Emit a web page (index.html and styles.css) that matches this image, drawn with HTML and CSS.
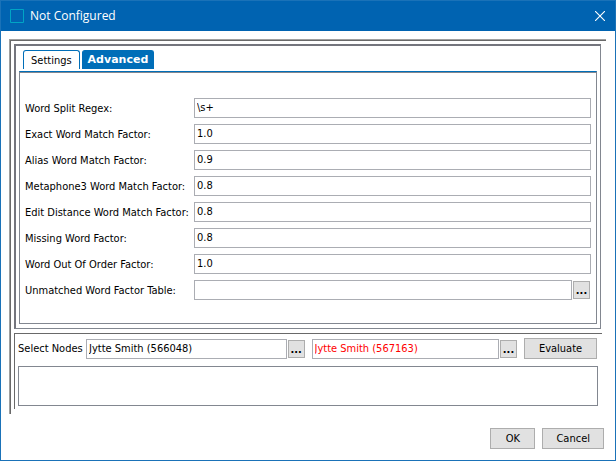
FILE: index.html
```html
<!DOCTYPE html>
<html lang="en">
<head>
  <meta charset="utf-8">
  <title>Not Configured</title>
  <link rel="stylesheet" href="styles.css">
</head>
<body>
  <div class="dialog">
    <header class="titlebar">
      <svg class="app-icon" width="14" height="14" viewBox="0 0 14 14">
        <path d="M0.5 13.5V0.5H13.5V13.5Z" fill="none" stroke="#00a5c5"/>
      </svg>
      <h1>Not Configured</h1>
      <button type="button" class="close" aria-label="Close">
        <svg width="10" height="10" viewBox="0 0 10 10">
          <path d="M0 0L10 10M10 0L0 10" fill="none" stroke="#fff" stroke-width="1.1"/>
        </svg>
      </button>
    </header>

    <form class="content">
      <div class="frame">
        <div class="tab-panel">
          <div class="tabs" role="tablist">
            <button type="button" class="tab" role="tab">Settings</button>
            <button type="button" class="tab active" role="tab" aria-selected="true">Advanced</button>
          </div>
          <div class="fields" role="tabpanel">
            <label for="regex">Word Split Regex:</label>
            <input type="text" id="regex" value="\s+">

            <label for="exact">Exact Word Match Factor:</label>
            <input type="text" id="exact" value="1.0">

            <label for="alias">Alias Word Match Factor:</label>
            <input type="text" id="alias" value="0.9">

            <label for="metaphone">Metaphone3 Word Match Factor:</label>
            <input type="text" id="metaphone" value="0.8">

            <label for="distance">Edit Distance Word Match Factor:</label>
            <input type="text" id="distance" value="0.8">

            <label for="missing">Missing Word Factor:</label>
            <input type="text" id="missing" value="0.8">

            <label for="order">Word Out Of Order Factor:</label>
            <input type="text" id="order" value="1.0">

            <label for="table">Unmatched Word Factor Table:</label>
            <div class="picker">
              <input type="text" id="table">
              <button type="button" class="browse">...</button>
            </div>
          </div>
        </div>

        <div class="evaluate-panel">
          <div class="nodes">
            <label for="node1">Select Nodes</label>
            <div class="picker first">
              <input type="text" id="node1" value="Jytte Smith (566048)">
              <button type="button" class="browse">...</button>
            </div>
            <div class="picker second">
              <input type="text" id="node2" class="error" aria-label="Second node" value="Jytte Smith (567163)">
              <button type="button" class="browse">...</button>
            </div>
            <button type="button" class="button">Evaluate</button>
          </div>
          <textarea class="output" aria-label="Result" readonly></textarea>
        </div>
      </div>

      <div class="actions">
        <button type="submit" class="button">OK</button>
        <button type="button" class="button">Cancel</button>
      </div>
    </form>
  </div>
</body>
</html>
```

FILE: styles.css
```css
* {
  box-sizing: border-box;
}
body {
  margin: 0;
  background: #fff;
}
body,
button,
input,
textarea {
  font-family: "DejaVu Sans Condensed", "DejaVu Sans", sans-serif;
  font-size: 11px;
  line-height: 14px;
  color: #000;
}
.dialog {
  display: flex;
  flex-direction: column;
  min-height: 100vh;
  border: 1px solid #1a72b8;
}

/* Title bar */
.titlebar {
  display: flex;
  align-items: center;
  height: 30px;
  padding: 0 10px 0 9px;
  background: #0063b1;
}
.titlebar h1 {
  flex: 1;
  margin: 0 0 0 6px;
  font-family: "Open Sans", "Noto Sans", sans-serif;
  font-size: 12px;
  font-weight: normal;
  line-height: 16px;
  color: #fff;
}
.close {
  display: flex;
  padding: 0;
  border: none;
  background: none;
}

/* Frames */
.content {
  padding: 8px 11px 0 8px;
}
.frame {
  margin-right: -2px;
  padding: 4px 5px 5px 4px;
  border: solid #a0a0a0;
  border-width: 1px 0 0 1px;
  box-shadow: inset 1px 1px #696969;
}
.tab-panel {
  padding: 4px 3px 4px 3px;
  border: 1px solid #828790;
  border-width: 2px 1px 1px 2px;
  border-top-color: #74757d;
  border-left-color: #74757d;
}

/* Tabs */
.tabs {
  display: flex;
  gap: 2px;
  padding: 0 4px 2px;
}
.tab {
  height: 19px;
  padding: 1px 7px 0;
  border: 1px solid #006eb8;
  border-bottom: none;
  border-radius: 3px 3px 0 0;
  background: #fff;
}
.tab.active {
  padding: 0 5px 1px;
  background: #006eb8;
  color: #fff;
  font-family: "DejaVu Sans", sans-serif;
  font-weight: bold;
}
.fields {
  display: grid;
  grid-template-columns: 163px 1fr;
  column-gap: 6px;
  row-gap: 6px;
  align-items: center;
  padding: 25px 5px 23px;
  border: 1px solid #828790;
  border-top: 1px solid #006eb8;
  box-shadow: inset 0 1px #828790;
  padding-top: 26px;
}
label {
  padding-top: 2px;
  white-space: nowrap;
}

/* Controls */
input {
  width: 100%;
  min-width: 0;
  height: 20px;
  padding: 0 2px 1px;
  border: 1px solid #abadb3;
  border-radius: 0;
  background: #fff;
}
.error {
  color: #f00;
}
.picker {
  display: flex;
  align-items: center;
  gap: 1px;
}
.browse {
  flex: none;
  width: 17px;
  height: 18px;
  padding: 2px 0 0;
  border: 1px solid #adadad;
  background: #e1e1e1;
  font-weight: bold;
}
.fields .browse {
  margin-right: 1px;
}
.button {
  height: 21px;
  padding: 0 13px;
  border: 1px solid #adadad;
  background: #e1e1e1;
}

/* Node selection */
.evaluate-panel {
  margin: 4px -1px 0 0;
  padding: 4px 4px 3px 3px;
  border: solid #696969;
  border-width: 1px 0 0 1px;
}
.nodes {
  display: flex;
  align-items: center;
}
.nodes label {
  width: 68px;
  padding-top: 0;
}
.nodes .first {
  flex: 218;
  margin-right: 7px;
}
.nodes .second {
  flex: 205;
  margin-right: 7px;
}
.nodes .button {
  min-width: 73px;
  margin-right: 1px;
}
.output {
  display: block;
  width: 100%;
  height: 40px;
  margin-top: 7px;
  border: 1px solid #828790;
  border-radius: 0;
  resize: none;
}

/* Dialog buttons */
.actions {
  display: flex;
  justify-content: flex-end;
  gap: 7px;
  padding-top: 14px;
}
.actions .button {
  min-width: 45px;
}
```
